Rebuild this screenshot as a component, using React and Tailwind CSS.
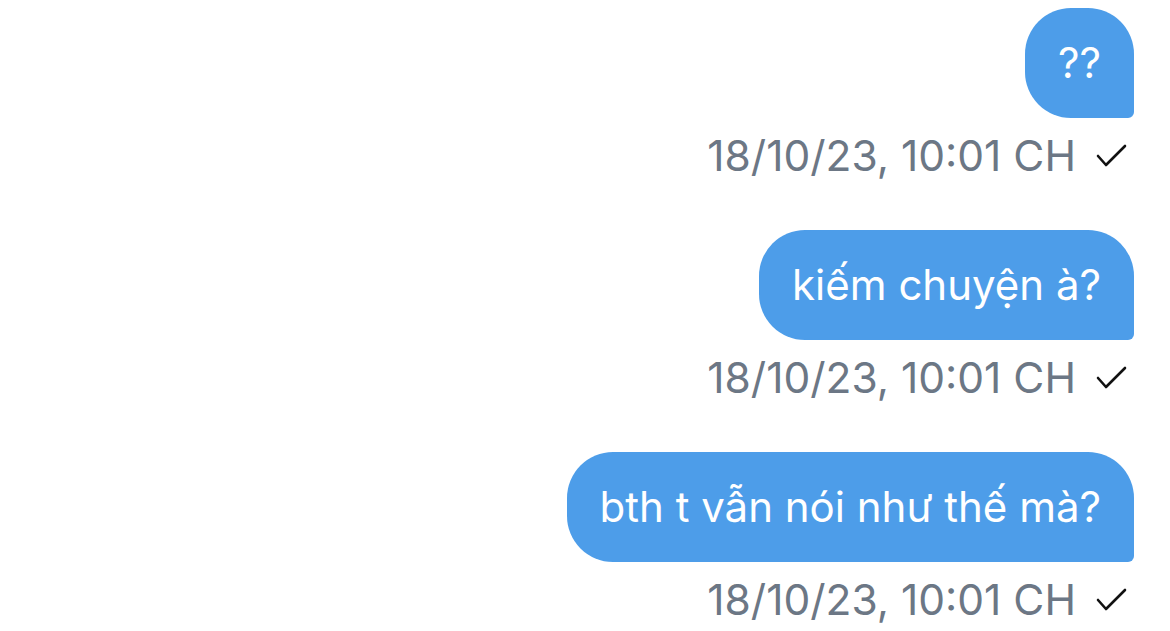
import React from "react";

const msgs = ["??", "kiếm chuyện à?", "bth t vẫn nói như thế mà?"];

function Check() {
  return (
    <svg width="32" height="24" viewBox="0 0 32 24" className="ml-[20px]">
      <polyline points="2,12 10,21 29,2" fill="none" stroke="#111" strokeWidth="2.6" strokeLinecap="round" strokeLinejoin="round" />
    </svg>
  );
}

export default function App() {
  return (
    <div className="w-[1170px] h-[631px] bg-white overflow-hidden flex flex-col items-end pr-[36px] pt-[8px]" style={{ fontFamily: "Inter, 'Noto Sans', sans-serif" }}>
      {msgs.map((m, i) => (
        <div key={i} className="flex flex-col items-end">
          <div className="h-[110px] flex items-center px-[33px] bg-[#4d9de9] text-white text-[42px] rounded-[46px] rounded-br-[6px] leading-none">
            {m}
          </div>
          <div className="h-[112px] flex items-start pt-[17px] mr-[6px]">
            <span className="text-[#6c7785] text-[42.5px] leading-[42px]">18/10/23, 10:01 CH</span>
            <span className="flex items-center h-[42px]"><Check /></span>
          </div>
        </div>
      ))}
    </div>
  );
}
